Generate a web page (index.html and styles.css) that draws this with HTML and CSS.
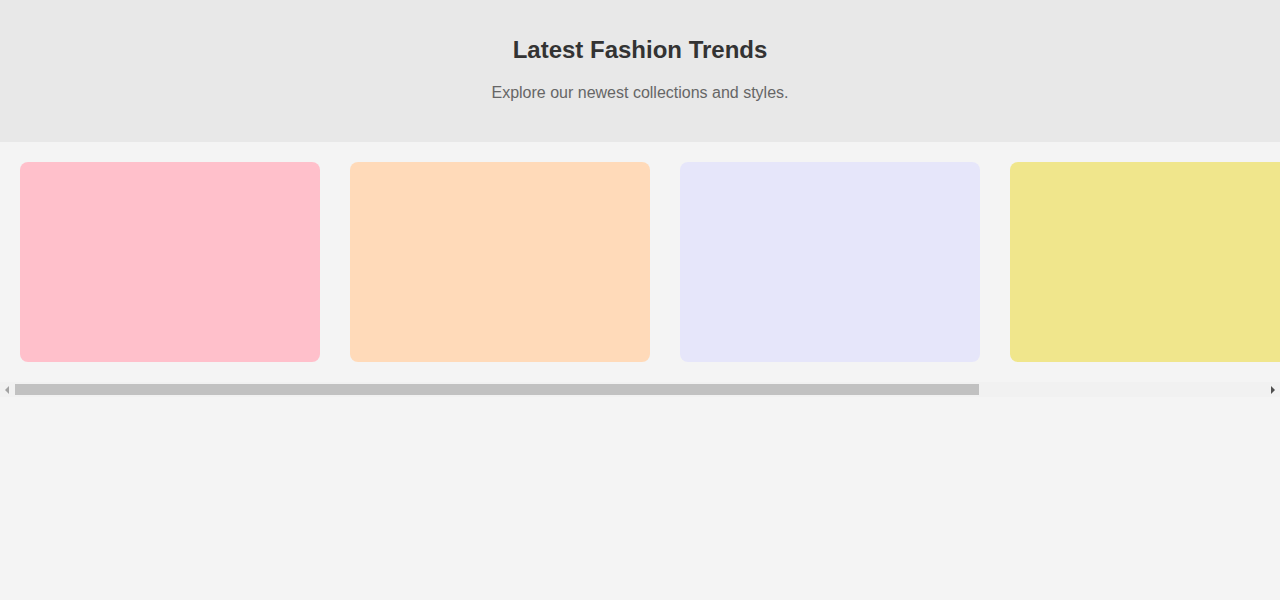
FILE: index.html
```html
<!DOCTYPE html>
<html lang="en">
<head>
<meta charset="utf-8">
<title>Latest Fashion Trends</title>
<link rel="stylesheet" href="styles.css">
</head>
<body>
<header class="hero">
  <h1 class="hero-title">Latest Fashion Trends</h1>
  <p class="hero-sub">Explore our newest collections and styles.</p>
</header>
<main class="carousel">
  <div class="gallery">
    <div class="card card-pink"></div>
    <div class="card card-peach"></div>
    <div class="card card-lavender"></div>
    <div class="card card-khaki"></div>
    <div class="card card-blue"></div>
  </div>
  <div class="scrollbar">
    <div class="sb-button sb-left"><span class="arrow arrow-left"></span></div>
    <div class="sb-track"><div class="sb-thumb"></div></div>
    <div class="sb-button sb-right"><span class="arrow arrow-right"></span></div>
  </div>
</main>
</body>
</html>
```
FILE: styles.css
```css
html, body {
  margin: 0;
  padding: 0;
}
body {
  background: #f4f4f4;
  font-family: "Liberation Sans", Arial, sans-serif;
}
.hero {
  background: #e8e8e8;
  text-align: center;
  padding: 36px 20px 39px;
}
.hero-title {
  margin: 0;
  font-size: 24px;
  font-weight: bold;
  color: #333;
  line-height: 28px;
}
.hero-sub {
  margin: 19px 0 0;
  font-size: 16px;
  line-height: 20px;
  color: #666;
}
.carousel {
  display: flex;
  flex-direction: column;
}
.gallery {
  display: flex;
  gap: 30px;
  padding: 20px;
  overflow: hidden;
}
.card {
  flex: 0 0 300px;
  height: 200px;
  border-radius: 8px;
}
.card-pink { background: #ffc0cb; }
.card-peach { background: #ffdab9; }
.card-lavender { background: #e6e6fa; }
.card-khaki { background: #f0e68c; }
.card-blue { background: #add8e6; }

.scrollbar {
  display: flex;
  height: 15px;
  background: #f1f1f1;
}
.sb-button {
  flex: 0 0 15px;
  display: flex;
  align-items: center;
  justify-content: center;
}
.sb-track {
  flex: 1;
  padding: 2px 0;
}
.sb-thumb {
  width: 964px;
  height: 11px;
  background: #c1c1c1;
}
.arrow {
  width: 0;
  height: 0;
  border-top: 4px solid transparent;
  border-bottom: 4px solid transparent;
}
.arrow-left {
  border-right: 4px solid #a3a3a3;
  margin-right: 1px;
}
.arrow-right {
  border-left: 4px solid #505050;
  margin-left: 1px;
}
```
